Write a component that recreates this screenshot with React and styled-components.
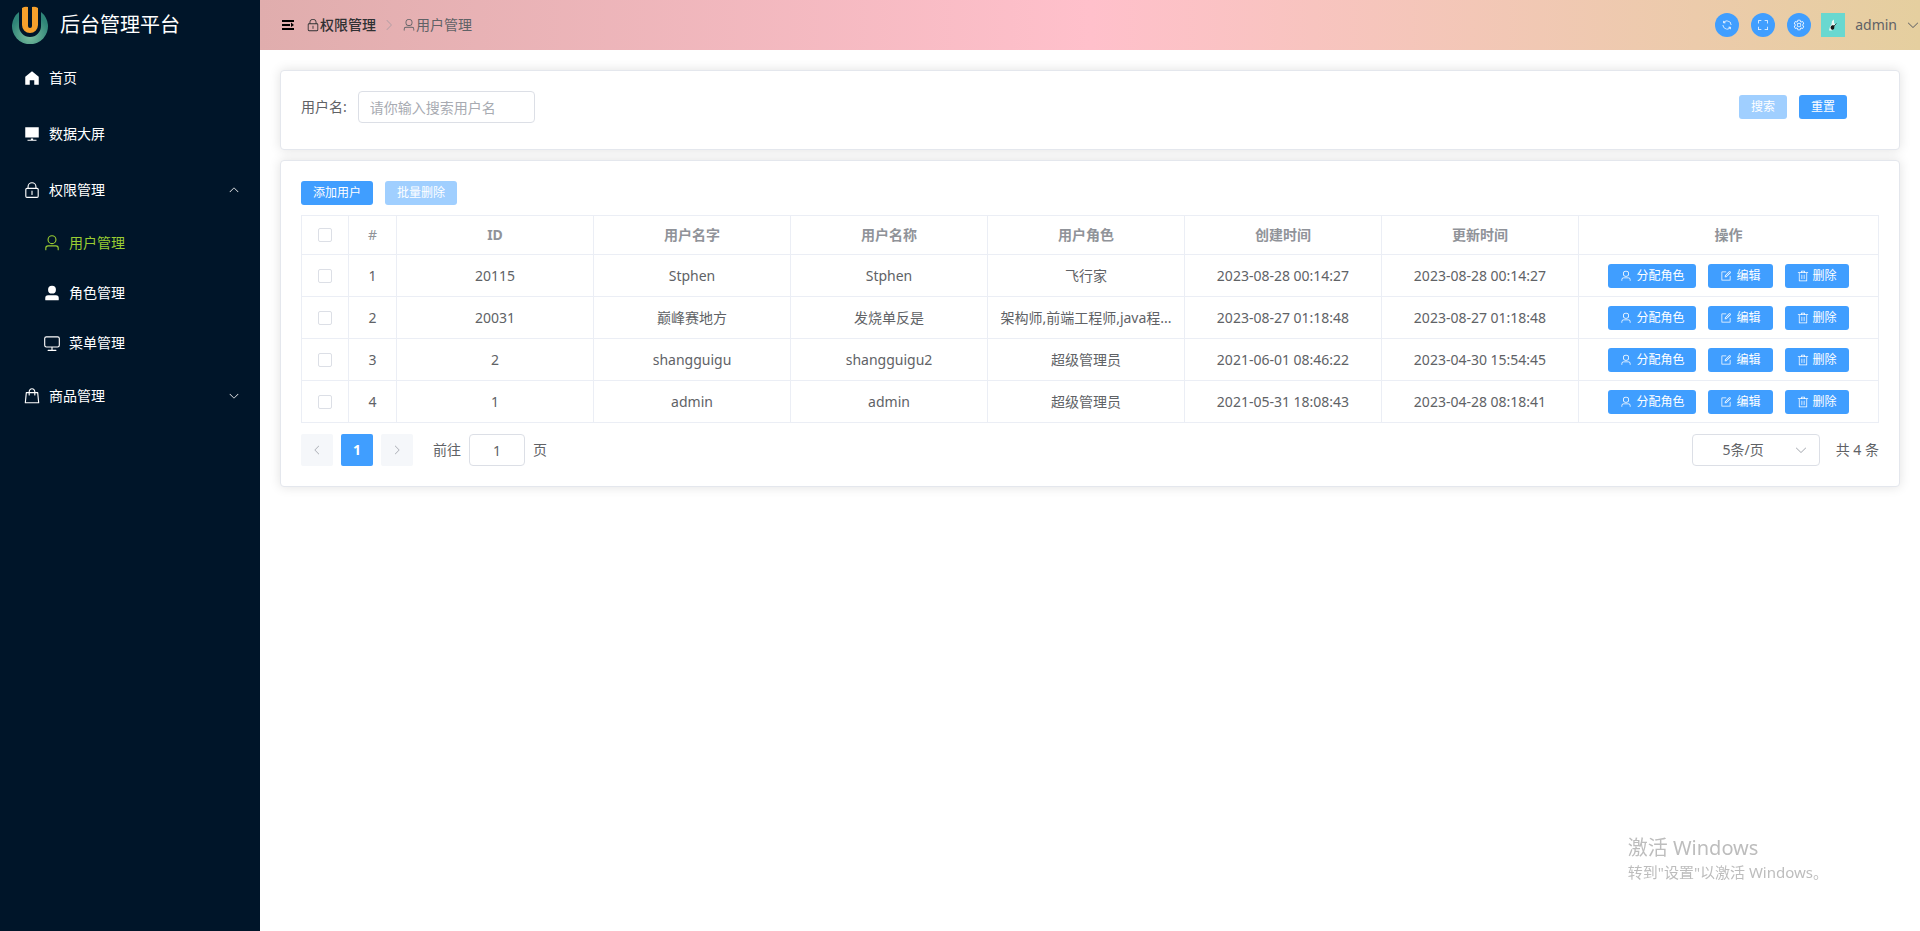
import React, { useState } from "react";
import styled, { createGlobalStyle, css } from "styled-components";

const Global = createGlobalStyle`
  *, *::before, *::after { box-sizing: border-box; }
  html, body, #root { height: 100%; }
  body {
    margin: 0;
    background: #fff;
    color: #606266;
    font-family: "Noto Sans", "Noto Sans CJK SC", sans-serif;
    font-size: 14px;
    line-height: 20px;
  }
  button, input, select { font: inherit; }
  ul { list-style: none; margin: 0; padding: 0; }
  a { color: inherit; text-decoration: none; }
`;

const PATHS = {
  home: "M512 128 128 447.936V896h255.936V640H640v256h255.936V447.936z",
  platform: "M448 832v-64h128v64h192v64H256v-64zM128 704V128h768v576z",
  lock: "M224 448a32 32 0 0 0-32 32v384a32 32 0 0 0 32 32h576a32 32 0 0 0 32-32V480a32 32 0 0 0-32-32zm0-64h576a96 96 0 0 1 96 96v384a96 96 0 0 1-96 96H224a96 96 0 0 1-96-96V480a96 96 0 0 1 96-96M512 544a32 32 0 0 1 32 32v192a32 32 0 1 1-64 0V576a32 32 0 0 1 32-32m192-160v-64a192 192 0 1 0-384 0v64zM512 64a256 256 0 0 1 256 256v128H256V320A256 256 0 0 1 512 64",
  user: "M512 512a192 192 0 1 0 0-384 192 192 0 0 0 0 384m0 64a256 256 0 1 1 0-512 256 256 0 0 1 0 512m320 320v-96a96 96 0 0 0-96-96H288a96 96 0 0 0-96 96v96a32 32 0 1 1-64 0v-96a160 160 0 0 1 160-160h448a160 160 0 0 1 160 160v96a32 32 0 1 1-64 0",
  userFilled: "M288 320a224 224 0 1 0 448 0 224 224 0 1 0-448 0m544 608H160a32 32 0 0 1-32-32v-96a160 160 0 0 1 160-160h448a160 160 0 0 1 160 160v96a32 32 0 0 1-32 32z",
  monitor: "M544 768v128h192a32 32 0 1 1 0 64H288a32 32 0 1 1 0-64h192V768H192A128 128 0 0 1 64 640V256a128 128 0 0 1 128-128h640a128 128 0 0 1 128 128v384a128 128 0 0 1-128 128zM192 192a64 64 0 0 0-64 64v384a64 64 0 0 0 64 64h640a64 64 0 0 0 64-64V256a64 64 0 0 0-64-64z",
  goods: "M320 288v-22.336C320 154.688 405.504 64 512 64s192 90.688 192 201.664v22.4h131.072a32 32 0 0 1 31.808 28.8l57.6 576a32 32 0 0 1-31.808 35.2H131.328a32 32 0 0 1-31.808-35.2l57.6-576a32 32 0 0 1 31.808-28.8H320zm64 0h256v-22.336C640 189.248 582.272 128 512 128c-70.272 0-128 61.248-128 137.664v22.4zm-64 64H217.92l-51.2 512h690.56l-51.264-512H704v96a32 32 0 1 1-64 0v-96H384v96a32 32 0 0 1-64 0z",
  arrow: "M831.872 340.864 512 652.672 192.128 340.864a30.592 30.592 0 0 0-42.752 0 29.12 29.12 0 0 0 0 41.6L489.664 714.24a32 32 0 0 0 44.672 0l340.288-331.712a29.12 29.12 0 0 0 0-41.728 30.592 30.592 0 0 0-42.752 0z",
  edit: "M832 512a32 32 0 1 1 64 0v352a32 32 0 0 1-32 32H160a32 32 0 0 1-32-32V160a32 32 0 0 1 32-32h352a32 32 0 0 1 0 64H192v640h640zM469.952 554.24l52.8-7.552L847.104 222.4a32 32 0 1 0-45.248-45.248L477.44 501.44l-7.552 52.8zm422.4-422.4a96 96 0 0 1 0 135.808l-331.84 331.84a32 32 0 0 1-18.112 9.088L436.8 623.68a32 32 0 0 1-36.224-36.224l15.104-105.6a32 32 0 0 1 9.024-18.112l331.904-331.84a96 96 0 0 1 135.744 0z",
  trash: "M160 256H96a32 32 0 0 1 0-64h256V95.936a32 32 0 0 1 32-32h256a32 32 0 0 1 32 32V192h256a32 32 0 1 1 0 64h-64v672a32 32 0 0 1-32 32H192a32 32 0 0 1-32-32zm448-64v-64H416v64zM224 896h576V256H224zm192-128a32 32 0 0 1-32-32V416a32 32 0 0 1 64 0v320a32 32 0 0 1-32 32m192 0a32 32 0 0 1-32-32V416a32 32 0 0 1 64 0v320a32 32 0 0 1-32 32",
  refresh: "M771.776 794.88A384 384 0 0 1 128 512h64a320 320 0 0 0 555.712 216.448H654.72a32 32 0 1 1 0-64h149.056a32 32 0 0 1 32 32v148.928a32 32 0 1 1-64 0v-50.56zM276.288 295.616h92.992a32 32 0 0 1 0 64H220.16a32 32 0 0 1-32-32V178.56a32 32 0 0 1 64 0v50.56A384 384 0 0 1 896.128 512h-64a320 320 0 0 0-555.776-216.384z",
  fullScreen: "M160 96.064l192 .192a32 32 0 0 1 0 64l-192-.192V352a32 32 0 0 1-64 0V96h64zm0 831.872V928H96V672a32 32 0 1 1 64 0v191.936l192-.192a32 32 0 1 1 0 64zM864 96.064V96h64v256a32 32 0 1 1-64 0V160.064l-192 .192a32 32 0 1 1 0-64zm0 831.872-192-.192a32 32 0 0 1 0-64l192 .192V672a32 32 0 1 1 64 0v256h-64z",
  setting: "M600.704 64a32 32 0 0 1 30.464 22.208l35.2 109.376c14.784 7.232 28.928 15.36 42.432 24.512l112.384-24.192a32 32 0 0 1 34.432 15.36L944.32 364.8a32 32 0 0 1-4.032 37.504l-77.12 85.12a357.12 357.12 0 0 1 0 49.024l77.12 85.248a32 32 0 0 1 4.032 37.504l-88.704 153.6a32 32 0 0 1-34.432 15.296L708.8 803.904c-13.44 9.088-27.648 17.28-42.368 24.512l-35.264 109.376A32 32 0 0 1 600.704 960H423.296a32 32 0 0 1-30.464-22.208L357.696 828.48a351.616 351.616 0 0 1-42.56-24.64l-112.32 24.256a32 32 0 0 1-34.432-15.36L79.68 659.2a32 32 0 0 1 4.032-37.504l77.12-85.248a357.12 357.12 0 0 1 0-48.896l-77.12-85.248A32 32 0 0 1 79.68 364.8l88.704-153.6a32 32 0 0 1 34.432-15.296l112.32 24.256c13.568-9.152 27.776-17.408 42.56-24.64l35.2-109.312A32 32 0 0 1 423.232 64H600.64zm-23.424 64H446.72l-36.352 113.088-24.512 11.968a294.113 294.113 0 0 0-34.816 20.096l-22.656 15.36-116.224-25.088-65.28 113.152 79.68 88.192-1.92 27.136a293.12 293.12 0 0 0 0 40.192l1.92 27.136-79.808 88.192 65.344 113.152 116.224-25.024 22.656 15.296a294.113 294.113 0 0 0 34.816 20.096l24.512 11.968L446.72 896h130.688l36.48-113.152 24.448-11.904a288.282 288.282 0 0 0 34.752-20.096l22.592-15.296 116.288 25.024 65.28-113.152-79.744-88.192 1.92-27.136a293.12 293.12 0 0 0 0-40.256l-1.92-27.136 79.808-88.128-65.344-113.152-116.288 24.96-22.592-15.232a287.616 287.616 0 0 0-34.752-20.096l-24.448-11.904L577.344 128zM512 320a192 192 0 1 1 0 384 192 192 0 0 1 0-384m0 64a128 128 0 1 0 0 256 128 128 0 0 0 0-256",
  expand: "M128 192h768v128H128zm0 256h512v128H128zm0 256h768v128H128zm576-352 192 160-192 128z",
};

const Svg = styled.svg`
  flex: none;
  display: block;
  width: ${(p) => p.$size}px;
  height: ${(p) => p.$size}px;
  fill: currentColor;
  transform: rotate(${(p) => p.$turn}deg);
`;

const Icon = ({ name, size = 14, turn = 0 }) => (
  <Svg viewBox="0 0 1024 1024" $size={size} $turn={turn} aria-hidden="true">
    <path d={PATHS[name]} />
  </Svg>
);

const Layout = styled.div`
  display: grid;
  grid-template-columns: 260px minmax(0, 1fr);
  min-height: 100%;
`;

const Sidebar = styled.aside`
  background: #001529;
  color: #fff;
`;

const Brand = styled.div`
  display: flex;
  align-items: center;
  gap: 12px;
  height: 50px;
  padding: 0 12px;
  font-size: 20px;
`;

const LogoSvg = styled.svg`
  display: block;
  width: 36px;
  height: 38px;
`;

const Logo = () => (
  <LogoSvg viewBox="0 0 36 38" aria-hidden="true">
    <defs>
      <radialGradient id="bowl" cx="18" cy="30" r="20" gradientUnits="userSpaceOnUse">
        <stop offset="0" stopColor="#7dbf9f" />
        <stop offset="1" stopColor="#2f8578" />
      </radialGradient>
    </defs>
    <path d="M7 6A18 18 0 1 0 29 6V20a11 11 0 0 1-22 0z" fill="url(#bowl)" />
    <path
      d="M10 2q3-2 6-1v19a2 2 0 0 0 4 0V1q3-1 6 1v17a8 8 0 0 1-16 0z"
      fill="#f5a02c"
    />
  </LogoSvg>
);

const MenuLink = styled.a`
  display: flex;
  align-items: center;
  gap: 8px;
  height: ${(p) => (p.$sub ? 50 : 56)}px;
  padding: 0 20px 0 ${(p) => (p.$sub ? 43 : 23)}px;
  color: ${(p) => (p.$active ? "#9acd32" : "#fff")};
`;

const MenuText = styled.span`
  flex: 1;
`;

const Main = styled.div`
  min-width: 0;
`;

const Header = styled.header`
  display: flex;
  align-items: center;
  justify-content: space-between;
  height: 50px;
  padding-left: 20px;
  background: linear-gradient(to right, #e0adad, #ffc0cb, #e5cf9f);
`;

const HeaderGroup = styled.div`
  display: flex;
  align-items: center;
  gap: ${(p) => p.$gap}px;
`;

const PlainButton = styled.button`
  display: flex;
  align-items: center;
  gap: 9px;
  padding: 0;
  border: 0;
  background: none;
  color: ${(p) => p.$color};
  cursor: pointer;
`;

const Crumbs = styled.nav`
  display: flex;
  align-items: center;
  gap: 6px;
  color: #b8a0a6;
`;

const Crumb = styled.a`
  display: flex;
  align-items: center;
  color: ${(p) => (p.$strong ? "#303133" : "#606266")};
  font-weight: ${(p) => (p.$strong ? 500 : 400)};
`;

const RoundButton = styled.button`
  display: flex;
  align-items: center;
  justify-content: center;
  width: 24px;
  height: 24px;
  padding: 0;
  border: 0;
  border-radius: 50%;
  background: #409eff;
  color: #fff;
  cursor: pointer;
`;

const Account = styled.div`
  display: flex;
  align-items: center;
  gap: 10px;
`;

const AvatarSvg = styled.svg`
  display: block;
  width: 24px;
  height: 24px;
`;

const Avatar = () => (
  <AvatarSvg viewBox="0 0 24 24" role="img" aria-label="admin">
    <rect width="24" height="24" fill="#69d8d0" />
    <path d="M11 8l2-1.500v3l1 2-1 3-2 3H8l1-4 1.500-2z" fill="#e9f7f3" />
    <path d="M10 13l2-1 1.500 1-.5 3-2 1-1.500-2z" fill="#151515" />
    <path d="M13 13l2.500-2.500" stroke="#39534f" />
  </AvatarSvg>
);

const Content = styled.main`
  display: flex;
  flex-direction: column;
  gap: 10px;
  padding: 20px;
`;

const Card = styled.section`
  padding: 20px;
  border: 1px solid #e4e7ed;
  border-radius: 4px;
  background: #fff;
  box-shadow: 0 0 12px rgba(0, 0, 0, 0.12);
`;

const SearchForm = styled.form`
  display: flex;
  justify-content: space-between;
  align-items: flex-start;
  padding: 0 32px 6px 0;
`;

const Field = styled.div`
  display: flex;
  align-items: center;
`;

const FieldLabel = styled.label`
  padding-right: 11px;
`;

const boxed = css`
  height: 32px;
  border: 1px solid #dcdfe6;
  border-radius: 4px;
  background: #fff;
  color: #606266;
  outline: none;
`;

const TextInput = styled.input`
  ${boxed}
  width: 177px;
  padding: 0 11px;
  &::placeholder { color: #a8abb2; opacity: 1; }
`;

const ButtonRow = styled.div`
  display: flex;
  align-items: center;
  justify-content: ${(p) => (p.$center ? "center" : "flex-start")};
  gap: 12px;
  min-height: ${(p) => (p.$tall ? 32 : 24)}px;
`;

const SmallButton = styled.button`
  display: inline-flex;
  align-items: center;
  gap: 4px;
  height: 24px;
  padding: 0 12px;
  border: 0;
  border-radius: 3px;
  background: ${(p) => (p.disabled ? "#a0cfff" : "#409eff")};
  color: #fff;
  font-size: 12px;
  cursor: pointer;
`;

const DataTable = styled.table`
  width: 100%;
  margin-top: 10px;
  table-layout: fixed;
  border-collapse: separate;
  border-spacing: 0;
  border-top: 1px solid #ebeef5;
  border-left: 1px solid #ebeef5;
  text-align: center;
`;

const Col = styled.col`
  width: ${(p) => (p.$width ? p.$width + "px" : "auto")};
`;

const cell = css`
  padding: 0 11px;
  border-right: 1px solid #ebeef5;
  border-bottom: 1px solid #ebeef5;
  overflow: hidden;
  text-overflow: ellipsis;
  white-space: nowrap;
`;

const Th = styled.th`
  ${cell}
  height: 39px;
  color: #909399;
  font-weight: ${(p) => (p.$light ? 400 : 700)};
`;

const Td = styled.td`
  ${cell}
  height: 42px;
`;

const Check = styled.input.attrs({ type: "checkbox" })`
  appearance: none;
  display: block;
  width: 14px;
  height: 14px;
  margin: 0 auto;
  border: 1px solid #dcdfe6;
  border-radius: 2px;
  background: #fff;
  &:checked { background: #409eff; border-color: #409eff; }
`;

const Pagination = styled.div`
  display: flex;
  align-items: center;
  justify-content: space-between;
  margin-top: 11px;
`;

const Pager = styled.div`
  display: flex;
  align-items: center;
  gap: 8px;
`;

const PageButton = styled.button`
  display: flex;
  align-items: center;
  justify-content: center;
  width: 32px;
  height: 32px;
  padding: 0;
  border: 0;
  border-radius: 2px;
  background: ${(p) => (p.$current ? "#409eff" : "#f5f7fa")};
  color: ${(p) => (p.$current ? "#fff" : "#a8abb2")};
  font-weight: 700;
`;

const JumpLabel = styled.label`
  display: flex;
  align-items: center;
  gap: 8px;
  margin-left: 12px;
`;

const JumpInput = styled.input`
  ${boxed}
  width: 56px;
  text-align: center;
`;

const SizePicker = styled.div`
  display: flex;
  align-items: center;
  gap: 16px;
`;

const SelectBox = styled.div`
  ${boxed}
  display: flex;
  align-items: center;
  width: 128px;
  padding-right: 11px;
  color: #a8abb2;
`;

const Select = styled.select`
  flex: 1;
  height: 30px;
  padding: 0;
  border: 0;
  appearance: none;
  background: none;
  color: #606266;
  text-align: center;
  text-align-last: center;
  outline: none;
`;

const Watermark = styled.div`
  position: fixed;
  right: 92px;
  bottom: 48px;
  color: #bdbdbd;
  font-size: 15px;
  line-height: 22px;
  pointer-events: none;
`;

const WatermarkTitle = styled.div`
  font-size: 20px;
  line-height: 26px;
`;

const MENU = [
  { icon: "home", text: "首页" },
  { icon: "platform", text: "数据大屏" },
  { icon: "lock", text: "权限管理", turn: 180 },
  { icon: "user", text: "用户管理", sub: true, active: true },
  { icon: "userFilled", text: "角色管理", sub: true },
  { icon: "monitor", text: "菜单管理", sub: true },
  { icon: "goods", text: "商品管理", turn: 0 },
];

const HEADS = ["ID", "用户名字", "用户名称", "用户角色", "创建时间", "更新时间", "操作"];

const USERS = [
  ["20115", "Stphen", "Stphen", "飞行家", "2023-08-28 00:14:27", "2023-08-28 00:14:27"],
  ["20031", "巅峰赛地方", "发烧单反是", "架构师,前端工程师,java程...", "2023-08-27 01:18:48", "2023-08-27 01:18:48"],
  ["2", "shangguigu", "shangguigu2", "超级管理员", "2021-06-01 08:46:22", "2023-04-30 15:54:45"],
  ["1", "admin", "admin", "超级管理员", "2021-05-31 18:08:43", "2023-04-28 08:18:41"],
];

export default function App() {
  const [keyword, setKeyword] = useState("");
  const [page, setPage] = useState("1");

  return (
    <>
      <Global />
      <Layout>
        <Sidebar>
          <Brand>
            <Logo />
            后台管理平台
          </Brand>
          <ul>
            {MENU.map((m) => (
              <li key={m.text}>
                <MenuLink href="#" $sub={m.sub} $active={m.active}>
                  <Icon name={m.icon} size={18} />
                  <MenuText>{m.text}</MenuText>
                  {m.turn !== undefined && <Icon name="arrow" size={12} turn={m.turn} />}
                </MenuLink>
              </li>
            ))}
          </ul>
        </Sidebar>

        <Main>
          <Header>
            <HeaderGroup $gap={10}>
              <PlainButton type="button" $color="#000" aria-label="折叠菜单">
                <Icon name="expand" size={16} />
              </PlainButton>
              <Crumbs>
                <Crumb href="#" $strong>
                  <Icon name="lock" size={14} />
                  权限管理
                </Crumb>
                <Icon name="arrow" size={14} turn={-90} />
                <Crumb href="#">
                  <Icon name="user" size={14} />
                  用户管理
                </Crumb>
              </Crumbs>
            </HeaderGroup>
            <HeaderGroup $gap={10}>
              <HeaderGroup $gap={12}>
                <RoundButton type="button" aria-label="刷新"><Icon name="refresh" size={12} /></RoundButton>
                <RoundButton type="button" aria-label="全屏"><Icon name="fullScreen" size={12} /></RoundButton>
                <RoundButton type="button" aria-label="设置"><Icon name="setting" size={12} /></RoundButton>
              </HeaderGroup>
              <Account>
                <Avatar />
                <PlainButton type="button" $color="#606266">
                  admin
                  <Icon name="arrow" size={14} />
                </PlainButton>
              </Account>
            </HeaderGroup>
          </Header>

          <Content>
            <Card>
              <SearchForm onSubmit={(e) => e.preventDefault()}>
                <Field>
                  <FieldLabel htmlFor="username">用户名:</FieldLabel>
                  <TextInput
                    id="username"
                    placeholder="请你输入搜索用户名"
                    value={keyword}
                    onChange={(e) => setKeyword(e.target.value)}
                  />
                </Field>
                <ButtonRow $tall>
                  <SmallButton type="submit" disabled={!keyword}>搜索</SmallButton>
                  <SmallButton type="button" onClick={() => setKeyword("")}>重置</SmallButton>
                </ButtonRow>
              </SearchForm>
            </Card>

            <Card>
              <ButtonRow>
                <SmallButton type="button">添加用户</SmallButton>
                <SmallButton type="button" disabled>批量删除</SmallButton>
              </ButtonRow>

              <DataTable>
                <colgroup>
                  <Col $width={47} />
                  <Col $width={48} />
                  {HEADS.slice(0, 6).map((h) => <Col key={h} />)}
                  <Col $width={300} />
                </colgroup>
                <thead>
                  <tr>
                    <Th><Check aria-label="全选" /></Th>
                    <Th $light>#</Th>
                    {HEADS.map((h) => <Th key={h}>{h}</Th>)}
                  </tr>
                </thead>
                <tbody>
                  {USERS.map((row, i) => (
                    <tr key={row[0]}>
                      <Td><Check aria-label={`选择 ${row[1]}`} /></Td>
                      <Td>{i + 1}</Td>
                      {row.map((v, j) => <Td key={j}>{v}</Td>)}
                      <Td>
                        <ButtonRow $center>
                          <SmallButton type="button"><Icon name="user" size={12} />分配角色</SmallButton>
                          <SmallButton type="button"><Icon name="edit" size={12} />编辑</SmallButton>
                          <SmallButton type="button"><Icon name="trash" size={12} />删除</SmallButton>
                        </ButtonRow>
                      </Td>
                    </tr>
                  ))}
                </tbody>
              </DataTable>

              <Pagination>
                <Pager>
                  <PageButton type="button" aria-label="上一页"><Icon name="arrow" size={12} turn={90} /></PageButton>
                  <PageButton type="button" $current>1</PageButton>
                  <PageButton type="button" aria-label="下一页"><Icon name="arrow" size={12} turn={-90} /></PageButton>
                  <JumpLabel>
                    前往
                    <JumpInput value={page} onChange={(e) => setPage(e.target.value)} />
                    页
                  </JumpLabel>
                </Pager>
                <SizePicker>
                  <SelectBox>
                    <Select aria-label="每页条数" defaultValue="5">
                      <option value="5">5条/页</option>
                      <option value="7">7条/页</option>
                      <option value="9">9条/页</option>
                    </Select>
                    <Icon name="arrow" size={14} />
                  </SelectBox>
                  <span>共 4 条</span>
                </SizePicker>
              </Pagination>
            </Card>
          </Content>
        </Main>
      </Layout>
      <Watermark>
        <WatermarkTitle>激活 Windows</WatermarkTitle>
        转到"设置"以激活 Windows。
      </Watermark>
    </>
  );
}
